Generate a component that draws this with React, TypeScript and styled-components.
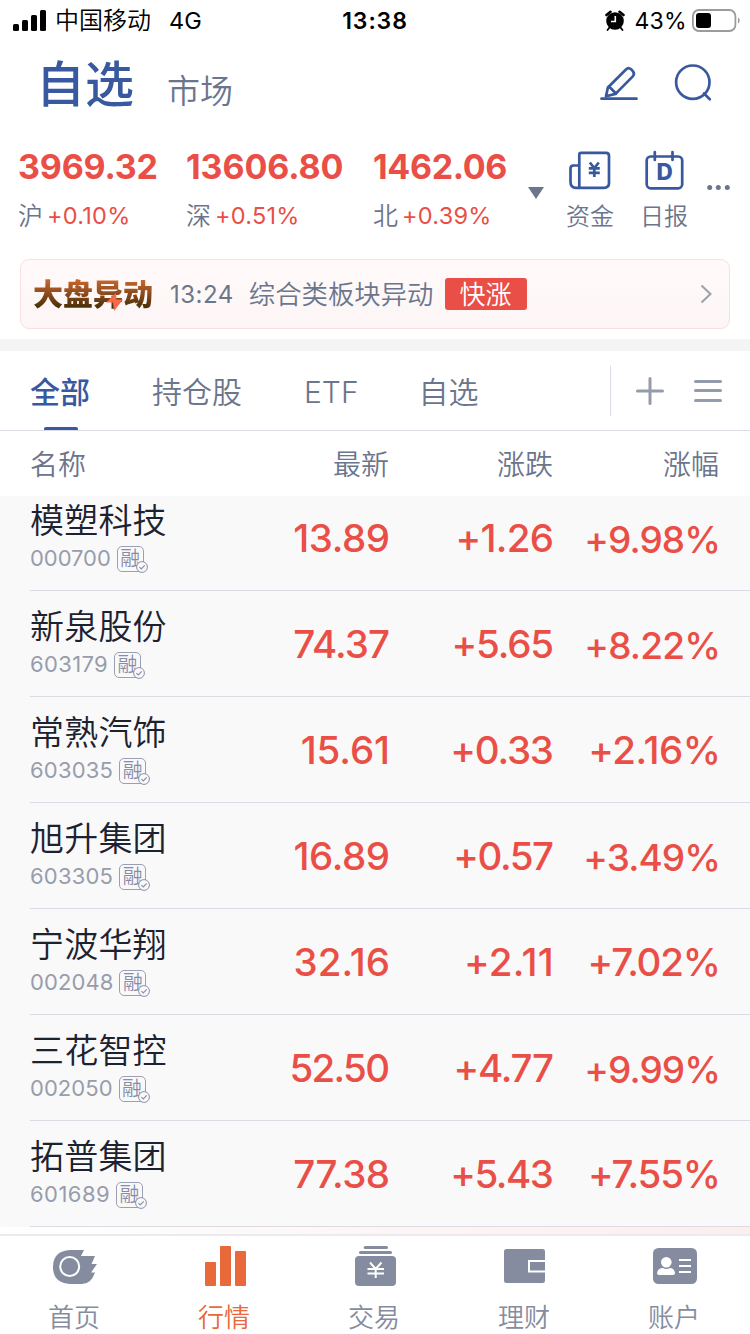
import React from "react";
import styled, { createGlobalStyle } from "styled-components";

const RED = "#ea4f47";
const BLUE = "#38589f";
const SLATE = "#6b758c";
const NAV = "#858c9f";
const ORANGE = "#e9693b";

const GlobalStyle = createGlobalStyle`
  * { box-sizing: border-box; }
  body {
    margin: 0;
    background: #fff;
    font-family: Inter, "Noto Sans CJK SC", sans-serif;
    overflow: hidden;
  }
  svg { display: block; flex: none; }
`;

const Screen = styled.div`
  width: 750px;
  height: 1334px;
  display: flex;
  flex-direction: column;
  overflow: hidden;
  background: #fff;
  white-space: nowrap;
`;

/* Status bar */
const StatusBar = styled.div`
  height: 40px;
  display: grid;
  grid-template-columns: 1fr auto 1fr;
  align-items: center;
  padding: 0 10px 0 13px;
  color: #000;
  line-height: 40px;
`;
const StatusLeft = styled.div`
  display: flex;
  align-items: center;
`;
const Carrier = styled.span`
  font-size: 24px;
  font-weight: 350;
  margin-left: 9px;
  padding-top: 1px;
`;
const Network = styled.span`
  font-size: 23.5px;
  margin-left: 18px;
  padding-top: 1px;
`;
const Clock = styled.span`
  font-size: 23px;
  font-weight: 600;
  letter-spacing: 0.9px;
  padding: 1px 3px 0 0;
`;
const StatusRight = styled.div`
  display: flex;
  align-items: center;
  justify-content: flex-end;
`;
const BatteryText = styled.span`
  font-size: 23px;
  letter-spacing: 0.3px;
  margin: 0 5px 0 9px;
  padding-top: 1px;
`;

/* Title bar */
const TitleBar = styled.header`
  height: 90px;
  display: flex;
  align-items: flex-start;
  padding: 0 36px 0 36px;
`;
const ActiveTitle = styled.h1`
  margin: 10px 0 0;
  font-size: 49px;
  font-weight: 500;
  line-height: 70px;
  color: ${BLUE};
`;
const OtherTitle = styled.span`
  margin: 27px auto 0 33px;
  font-size: 33px;
  font-weight: 350;
  line-height: 48px;
  color: ${SLATE};
`;
const TitleIcons = styled.div`
  display: flex;
  gap: 32px;
  margin-top: 22px;
`;

/* Index summary */
const Indices = styled.section`
  height: 129px;
  display: flex;
  padding-left: 18px;
`;
const IndexItem = styled.div<{ $width: number }>`
  width: ${(p) => p.$width}px;
  padding-top: 17px;
`;
const IndexValue = styled.div<{ $spacing: number }>`
  font-size: 34px;
  font-weight: 700;
  line-height: 40px;
  letter-spacing: ${(p) => p.$spacing}px;
  color: ${RED};
`;
const IndexChange = styled.div`
  display: flex;
  align-items: center;
  gap: 4px;
  margin-top: 11px;
  line-height: 36px;
`;
const Market = styled.span`
  font-size: 25px;
  font-weight: 350;
  color: ${SLATE};
`;
const MarketPercent = styled.span`
  font-size: 23.5px;
  letter-spacing: 0.25px;
  color: ${RED};
`;
const Toggle = styled.div`
  width: 38px;
  padding-top: 57px;
`;
const Shortcut = styled.div<{ $width: number }>`
  width: ${(p) => p.$width}px;
  padding-top: 19px;
  font-size: 24px;
  font-weight: 350;
  line-height: 36px;
  color: ${SLATE};
  svg { margin: 0 0 8px 1px; }
`;
const MoreDots = styled.div`
  padding-top: 55px;
`;

/* Alert banner */
const Banner = styled.section`
  height: 70px;
  margin: 0 20px 10px;
  flex: none;
  display: flex;
  align-items: center;
  padding: 0 17px 0 12px;
  border: 1px solid #fadfe1;
  border-radius: 9px;
  background: linear-gradient(#fffaf9, #fdf5f6);
  color: ${SLATE};
  font-size: 26px;
  font-weight: 350;
`;
const BannerLogo = styled.span`
  position: relative;
  font-size: 30px;
  font-weight: 900;
  line-height: 36px;
  svg { position: absolute; left: 73px; top: 17px; }
`;
const LogoText = styled.span`
  display: block;
  color: transparent;
  background: linear-gradient(#c9672c 10%, #8a4a1c 50%, #4c3208 85%);
  background-clip: text;
  -webkit-background-clip: text;
`;
const BannerTime = styled.span`
  font-size: 24px;
  font-weight: 400;
  letter-spacing: 0.5px;
  margin: 0 15px 0 17px;
`;
const BannerText = styled.span`
  font-size: 26.4px;
  padding-bottom: 4px;
`;
const SpeedTag = styled.span`
  width: 82px;
  height: 32px;
  margin: 0 auto 0 11px;
  border-radius: 3px;
  background: ${RED};
  color: #fff;
  line-height: 33px;
  text-align: center;
`;
const Divider = styled.div`
  height: 12px;
  flex: none;
  background: #f4f4f4;
`;

/* Group tabs */
const Tabs = styled.nav`
  height: 80px;
  flex: none;
  display: flex;
  align-items: stretch;
  padding: 0 27px 0 30px;
  border-bottom: 1px solid #dcdce4;
`;
const Tab = styled.div<{ $active?: boolean; $gap: number }>`
  display: flex;
  flex-direction: column;
  align-items: center;
  justify-content: space-between;
  margin-right: ${(p) => p.$gap}px;
  padding-top: 19px;
  font-size: 30px;
  line-height: 44px;
  font-weight: ${(p) => (p.$active ? 500 : 350)};
  color: ${(p) => (p.$active ? BLUE : SLATE)};
  &::after {
    content: "";
    width: 34px;
    height: 3px;
    margin-left: 2px;
    border-radius: 2px 2px 0 0;
    background: ${(p) => (p.$active ? BLUE : "transparent")};
  }
`;
const TabTools = styled.div`
  display: flex;
  align-items: center;
  gap: 28px;
  height: 50px;
  margin: 15px 0 0 auto;
  padding-left: 24px;
  border-left: 1px solid #dcdce4;
`;

/* Stock table */
const columns = `
  display: grid;
  grid-template-columns: 200px 159px 164px 166px;
  margin-left: 30px;
`;
const TableHead = styled.div`
  ${columns}
  height: 65px;
  flex: none;
  align-items: center;
  padding-bottom: 1px;
  font-size: 28px;
  font-weight: 350;
  color: ${SLATE};
  span + span { text-align: right; }
`;
const List = styled.div`
  height: 731px;
  flex: none;
  display: flex;
  flex-direction: column;
  justify-content: flex-end;
  overflow: hidden;
  background: #f9f9f9;
`;
const Row = styled.div`
  ${columns}
  grid-template-columns: 200px 160px 164px 167px;
  height: 106px;
  flex: none;
  border-bottom: 1px solid #dcdce4;
`;
const StockCell = styled.div`
  padding-top: 12px;
`;
const StockName = styled.div`
  font-size: 34px;
  font-weight: 350;
  line-height: 48px;
  letter-spacing: 0.2px;
  color: #1d2231;
`;
const StockMeta = styled.div`
  display: flex;
  align-items: center;
  height: 28px;
`;
const StockCode = styled.span<{ $spacing: number }>`
  font-size: 22px;
  line-height: 28px;
  letter-spacing: ${(p) => p.$spacing}px;
  padding-bottom: 2px;
  color: #989dac;
`;
const MarginBadge = styled.span`
  position: relative;
  width: 27px;
  height: 26px;
  margin: 0 0 0 6px;
  border: 1px solid #9a9fb6;
  border-radius: 5px;
  font-size: 20px;
  font-weight: 350;
  line-height: 24px;
  text-align: center;
  color: #868ca8;
  svg { position: absolute; right: -5px; bottom: -2px; }
`;
const Quote = styled.div<{ $size?: number; $spacing: number; $drop?: number }>`
  padding-top: ${(p) => 1 + (p.$drop ?? 0)}px;
  padding-right: ${(p) => -Math.min(p.$spacing, 0)}px;
  font-size: ${(p) => p.$size ?? 38.5}px;
  font-weight: 480;
  line-height: 104px;
  letter-spacing: ${(p) => p.$spacing}px;
  text-align: right;
  color: ${RED};
`;
const Strip = styled.div`
  height: 7px;
  flex: none;
  background: linear-gradient(90deg, #fff, #fdf4f4 60%, #fdeeee);
`;

/* Bottom navigation */
const BottomNav = styled.nav`
  height: 100px;
  flex: none;
  display: flex;
  border-top: 2px solid #ebebed;
`;
const NavItem = styled.div<{ $active?: boolean }>`
  width: 150px;
  padding-top: 4px;
  font-size: 26px;
  font-weight: 350;
  line-height: 36px;
  text-align: center;
  color: ${(p) => (p.$active ? ORANGE : NAV)};
  svg { margin-bottom: 13px; }
`;
const NavLabel = styled.span`
  padding-right: 2px;
`;

const Signal = () => (
  <svg width="33" height="22" viewBox="0 0 33 22">
    <rect x="0" y="14" width="6" height="7" rx="1.5" />
    <rect x="9" y="10" width="6" height="11" rx="1.5" />
    <rect x="18" y="5" width="6" height="16" rx="1.5" />
    <rect x="27" y="0" width="6" height="21" rx="1.5" />
  </svg>
);

const Alarm = () => (
  <svg width="20" height="22" viewBox="0 0 20 22">
    <circle cx="10" cy="11" r="8.8" />
    <path d="M1.5 5 5.5 1.8M18.500 5 14.500 1.800" stroke="#000" strokeWidth="2.600" strokeLinecap="round" />
    <path d="M4.500 17.500 2.500 20M15.500 17.500 17.500 20" stroke="#000" strokeWidth="1.800" strokeLinecap="round" />
    <path d="M10.300 6v5.500H6" fill="none" stroke="#fff" strokeWidth="1.600" />
  </svg>
);

const Battery = () => (
  <svg width="48" height="24" viewBox="0 0 48 24">
    <rect x="0.9" y="1" width="42.500" height="21" rx="6" fill="none" stroke="#9b9b9b" strokeWidth="1.800" />
    <rect x="4" y="4" width="15" height="15" rx="3" />
    <path d="M46 8.500c2.200.8 2.200 5.200 0 6z" fill="#9b9b9b" />
  </svg>
);

const Pencil = () => (
  <svg width="42" height="42" viewBox="0 0 42 42" fill="none" stroke={BLUE} strokeWidth="2.700" strokeLinecap="round" strokeLinejoin="round">
    <path d="M3.500 36.700H38.500" />
    <path d="M8 34.300 9.900 25.500 28.200 7.300Q30.500 4.900 33 7.200L35 9.400Q37 12 34.800 14.400L17.500 31.900Z" />
    <path d="M11 24.500 18 31.500" />
  </svg>
);

const Search = () => (
  <svg width="42" height="42" viewBox="0 0 42 42" fill="none" stroke={BLUE} strokeWidth="2.700" strokeLinecap="round">
    <circle cx="20.800" cy="20.200" r="16.700" />
    <path d="M32 31.500 37.800 37.200" />
  </svg>
);

const Funds = () => (
  <svg width="44" height="42" viewBox="0 0 44 42" fill="none" stroke={BLUE} strokeWidth="2.700">
    <path d="M12.300 38.800V5.500Q12.300 3.800 14 3.800H39Q42 3.800 42 6.800V34Q42 38.800 37 38.800H9Q3.500 38.800 3.500 33V19.500Q3.500 16.500 6.500 16.500H12.300V38.800" />
    <path d="M22.800 13.500 27.300 19 31.800 13.500M27.300 19V28M21.800 19.300H32.800M21.800 23.800H32.800" />
  </svg>
);

const Daily = () => (
  <svg width="44" height="42" viewBox="0 0 44 42" fill="none" stroke={BLUE} strokeWidth="2.700" strokeLinecap="round">
    <rect x="5.700" y="7.500" width="35.500" height="31.800" rx="4" />
    <path d="M13.800 3V11M31.500 3V11" />
    <text x="23.700" y="31.400" textAnchor="middle" fontSize="22.500" fontWeight="800" fill={BLUE} stroke="none">D</text>
  </svg>
);

const MarginMark = () => (
  <MarginBadge>
    融
    <svg width="12" height="12" viewBox="0 0 12 12" fill="#f9f9f9" stroke="#8a90aa">
      <circle cx="6" cy="6" r="5.400" />
      <path d="M3.400 6.100 5.300 8 8.700 4.300" fill="none" strokeWidth="1.200" />
    </svg>
  </MarginBadge>
);

const NavIcon = ({ children }: { children: React.ReactNode }) => (
  <svg width="150" height="47" viewBox="0 0 150 47" fill="currentColor">{children}</svg>
);

/* tracking: code, price, change, percent */
const stocks = [
  { name: "模塑科技", code: "000700", price: "13.89", change: "+1.26", percent: "+9.98%", size: 37, tracking: [-0.05, -0.45, -0.7, -0.9] },
  { name: "新泉股份", code: "603179", price: "74.37", change: "+5.65", percent: "+8.22%", size: 37, tracking: [0.35, -0.95, -1.2, -0.8] },
  { name: "常熟汽饰", code: "603035", price: "15.61", change: "+0.33", percent: "+2.16%", size: 38.5, tracking: [0.2, -0.1, -1.2, -0.45] },
  { name: "旭升集团", code: "603305", price: "16.89", change: "+0.57", percent: "+3.49%", size: 37, tracking: [0.2, -0.45, -1.45, -0.9] },
  { name: "宁波华翔", code: "002048", price: "32.16", change: "+2.11", percent: "+7.02%", size: 38.5, tracking: [0.1, 0, 0.3, -1.2] },
  { name: "三花智控", code: "002050", price: "52.50", change: "+4.77", percent: "+9.99%", size: 37, tracking: [0.05, -1.7, -1.2, -0.9] },
  { name: "拓普集团", code: "601689", price: "77.38", change: "+5.43", percent: "+7.55%", size: 38.5, tracking: [0.45, -0.55, -1.45, -1.2] },
];

const indices = [
  { value: "3969.32", market: "沪", percent: "+0.10%", width: 168, spacing: -0.2 },
  { value: "13606.80", market: "深", percent: "+0.51%", width: 187, spacing: -0.1 },
  { value: "1462.06", market: "北", percent: "+0.39%", width: 155, spacing: -0.35 },
];

export default function App() {
  return (
    <Screen>
      <GlobalStyle />
      <StatusBar>
        <StatusLeft>
          <Signal />
          <Carrier>中国移动</Carrier>
          <Network>4G</Network>
        </StatusLeft>
        <Clock>13:38</Clock>
        <StatusRight>
          <Alarm />
          <BatteryText>43%</BatteryText>
          <Battery />
        </StatusRight>
      </StatusBar>

      <TitleBar>
        <ActiveTitle>自选</ActiveTitle>
        <OtherTitle>市场</OtherTitle>
        <TitleIcons>
          <Pencil />
          <Search />
        </TitleIcons>
      </TitleBar>

      <Indices>
        {indices.map((item) => (
          <IndexItem key={item.market} $width={item.width}>
            <IndexValue $spacing={item.spacing}>{item.value}</IndexValue>
            <IndexChange>
              <Market>{item.market}</Market>
              <MarketPercent>{item.percent}</MarketPercent>
            </IndexChange>
          </IndexItem>
        ))}
        <Toggle>
          <svg width="16" height="12" viewBox="0 0 16 12" fill={SLATE}>
            <path d="M0 0H16L8 12Z" />
          </svg>
        </Toggle>
        <Shortcut $width={74}>
          <Funds />
          资金
        </Shortcut>
        <Shortcut $width={67}>
          <Daily />
          日报
        </Shortcut>
        <MoreDots>
          <svg width="24" height="6" viewBox="0 0 24 6" fill={SLATE}>
            <circle cx="2.700" cy="2.500" r="2.500" />
            <circle cx="11.300" cy="2.500" r="2.500" />
            <circle cx="20.300" cy="2.500" r="2.500" />
          </svg>
        </MoreDots>
      </Indices>

      <Banner>
        <BannerLogo>
          <LogoText>大盘异动</LogoText>
          <svg width="18" height="18" viewBox="0 0 18 18" fill="#f7694b">
            <path d="M10 0 0 9.500H7L8 18 17 6.500H10.500Z" />
          </svg>
        </BannerLogo>
        <BannerTime>13:24</BannerTime>
        <BannerText>综合类板块异动</BannerText>
        <SpeedTag>快涨</SpeedTag>
        <svg width="12" height="20" viewBox="0 0 12 20" fill="none" stroke="#9a9fae" strokeWidth="2">
          <path d="M1.500 1.500 10.500 10 1.500 18.500" />
        </svg>
      </Banner>
      <Divider />

      <Tabs>
        <Tab $active $gap={62}>全部</Tab>
        <Tab $gap={62}>持仓股</Tab>
        <Tab $gap={60}>ETF</Tab>
        <Tab $gap={0}>自选</Tab>
        <TabTools>
          <svg width="30" height="30" viewBox="0 0 30 30" stroke="#949baa" strokeWidth="3" strokeLinecap="round">
            <path d="M2.500 15H27.500M15 2.500V27.500" />
          </svg>
          <svg width="30" height="30" viewBox="0 0 30 30" stroke="#949baa" strokeWidth="3" strokeLinecap="round">
            <path d="M2.500 5.500H27.500M2.500 14.500H27.500M2.500 24.500H27.500" />
          </svg>
        </TabTools>
      </Tabs>

      <TableHead>
        <span>名称</span>
        <span>最新</span>
        <span>涨跌</span>
        <span>涨幅</span>
      </TableHead>
      <List>
        {stocks.map((s) => (
          <Row key={s.code}>
            <StockCell>
              <StockName>{s.name}</StockName>
              <StockMeta>
                <StockCode $spacing={s.tracking[0]}>{s.code}</StockCode>
                <MarginMark />
              </StockMeta>
            </StockCell>
            <Quote $spacing={s.tracking[1]}>{s.price}</Quote>
            <Quote $spacing={s.tracking[2]}>{s.change}</Quote>
            <Quote $size={s.size} $spacing={s.tracking[3]} $drop={s.size < 38 ? 2 : 0}>{s.percent}</Quote>
          </Row>
        ))}
      </List>
      <Strip />

      <BottomNav>
        <NavItem>
          <NavIcon>
            <path d="M70 10H84L81 16H95L91.500 24H97L91 32.500H95Q91 44 82 44H70Q53 43 53 27T70 10Z" />
            <circle cx="69.700" cy="26.500" r="9.500" fill="none" stroke="#fff" strokeWidth="2" />
          </NavIcon>
          <NavLabel>首页</NavLabel>
        </NavItem>
        <NavItem $active>
          <NavIcon>
            <rect x="55" y="22" width="11" height="24" rx="1" />
            <rect x="70" y="6" width="11" height="40" rx="1" />
            <rect x="85" y="11" width="11" height="35" rx="1" />
          </NavIcon>
          <NavLabel>行情</NavLabel>
        </NavItem>
        <NavItem>
          <NavIcon>
            <rect x="63.700" y="6" width="24.300" height="3" rx="1.500" />
            <rect x="59" y="11" width="33" height="3" rx="1.500" />
            <rect x="55" y="16" width="41" height="30" rx="4" />
            <path d="M70 22.500 75.700 29 81.500 22.500M75.700 29V38M67.500 29H84M67.500 33.500H84" fill="none" stroke="#fff" strokeWidth="2" />
          </NavIcon>
          <NavLabel>交易</NavLabel>
        </NavItem>
        <NavItem>
          <NavIcon>
            <rect x="54" y="9" width="41" height="34" rx="2.500" />
            <path d="M96 21H79V31.500H96" fill="none" stroke="#fff" strokeWidth="2" />
          </NavIcon>
          <NavLabel>理财</NavLabel>
        </NavItem>
        <NavItem>
          <NavIcon>
            <rect x="53" y="8" width="44" height="36" rx="5.500" />
            <g fill="#fff">
              <circle cx="66.300" cy="22.200" r="5.300" />
              <path d="M57 33Q58 28 63 28Q66.500 30 70 28Q74 28 75 33Q75 35 73 35H59Q57 35 57 33Z" />
              <path d="M79 19H91V21H79ZM79 25H91V27H79ZM79 31H91V33H79Z" />
            </g>
          </NavIcon>
          <NavLabel>账户</NavLabel>
        </NavItem>
      </BottomNav>
    </Screen>
  );
}
